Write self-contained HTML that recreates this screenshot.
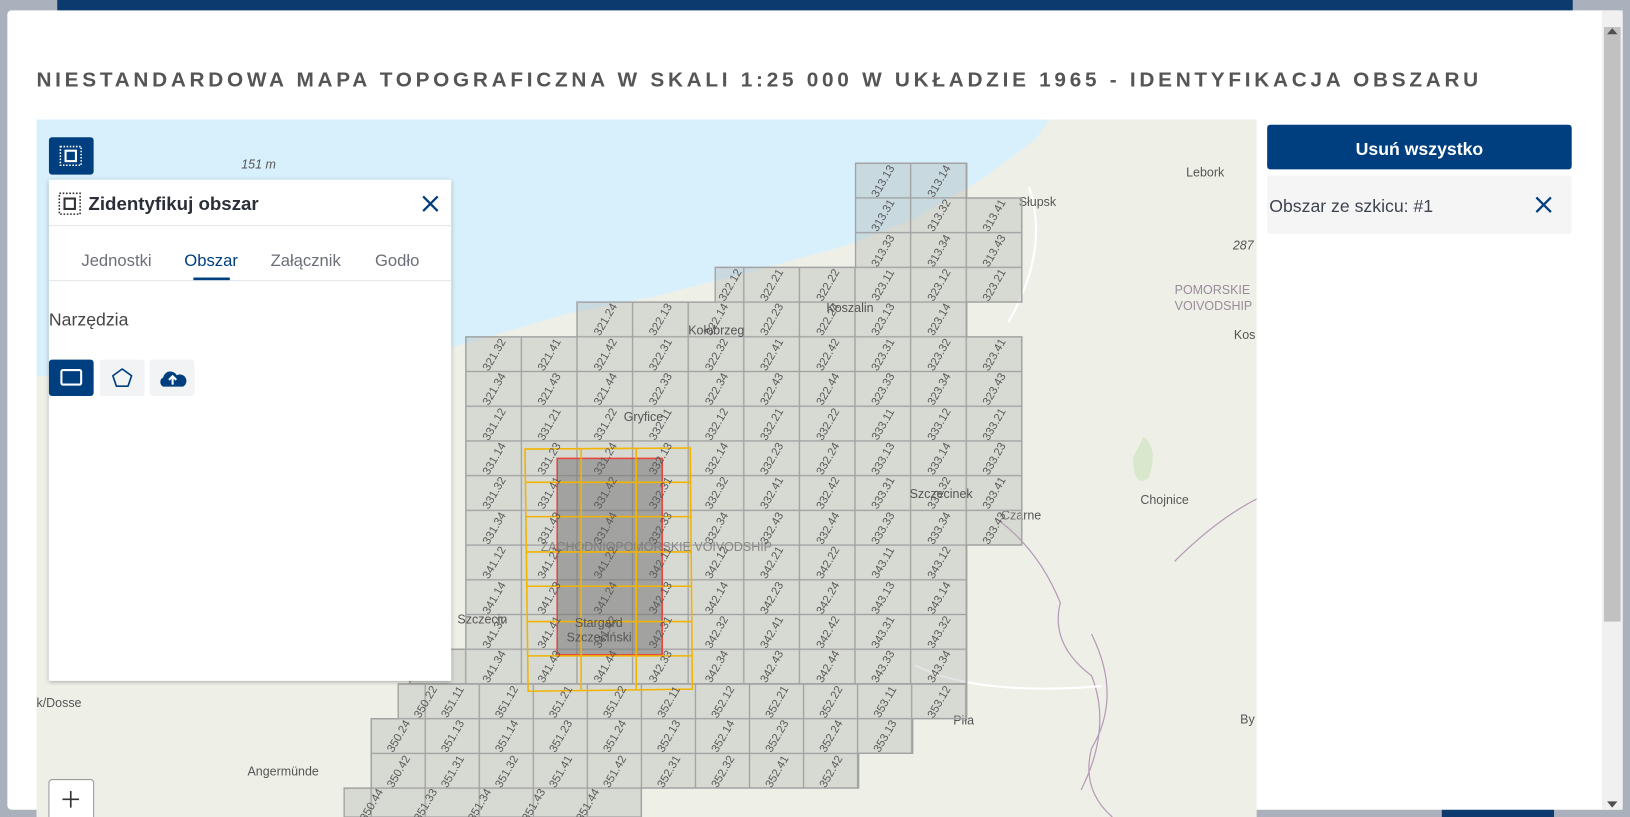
<!DOCTYPE html>
<html><head><meta charset="utf-8"><style>
html,body{margin:0;padding:0;width:1630px;height:817px;overflow:hidden;background:#aab1bc}
svg{display:block}
.l text{font:11px "Liberation Sans",sans-serif;fill:#5a5a5a;text-anchor:middle}
.c{font-family:"Liberation Sans",sans-serif;fill:#555;font-size:12px}
</style></head><body>
<svg width="1630" height="817" viewBox="0 0 1568 786" xmlns="http://www.w3.org/2000/svg">
<defs>
<clipPath id="mc"><rect x="35" y="115" width="1174" height="671"/></clipPath>
<pattern id="p1" patternUnits="userSpaceOnUse" x="448" y="157" width="53.5" height="33.4"><rect width="53.5" height="33.4" fill="none" stroke="#a2a2a2" stroke-width="1.3"/></pattern>
<pattern id="p2" patternUnits="userSpaceOnUse" x="357" y="658" width="52" height="33.4"><rect width="52" height="33.4" fill="none" stroke="#a2a2a2" stroke-width="1.3"/></pattern>
<filter id="sh" x="-5%" y="-5%" width="110%" height="110%"><feDropShadow dx="0" dy="1" stdDeviation="2" flood-opacity="0.3"/></filter>
</defs>
<rect width="1568" height="786" fill="#aab1bc"/>
<rect x="55" y="0" width="1458" height="12" fill="#0d3a6e"/>
<rect x="1387" y="776" width="108" height="10" fill="#0d3a6e"/>
<rect x="7" y="10" width="1554" height="769" rx="4" fill="#fff"/>
<rect x="1541" y="10" width="20" height="769" fill="#f0f0f0"/>
<rect x="1543" y="26" width="16" height="572" fill="#c1c1c1"/>
<path d="M1546 33 l5 -6 l5 6z M1546 771 l5 6 l5 -6z" fill="#505050"/>
<text x="35" y="83" textLength="1387" lengthAdjust="spacing" style="font:bold 20px 'Liberation Sans',sans-serif;fill:#555">NIESTANDARDOWA MAPA TOPOGRAFICZNA W SKALI 1:25 000 W UKŁADZIE 1965 - IDENTYFIKACJA OBSZARU</text>
<g clip-path="url(#mc)">
<rect x="35" y="115" width="1174" height="671" fill="#eef0e8"/>
<path d="M35 115 L1010 115 L995 135 L945 172 L880 210 L815 236 L720 262 L630 285 L545 302 L450 330 L380 348 L35 362Z" fill="#d8f0fb"/>
<path d="M1100 420 q15 10 5 40 q-15 10 -15 -20z" fill="#d9e8cc"/>
<path d="M960 500 q40 30 60 80 q-10 40 30 70 q20 50 -10 110" fill="none" stroke="#b79ab8" stroke-width="1.2"/>
<path d="M1050 610 q30 60 0 110 q-10 40 20 66" fill="none" stroke="#b79ab8" stroke-width="1.2"/>
<path d="M1130 540 q40 -40 79 -60" fill="none" stroke="#b79ab8" stroke-width="1.2"/>
<path d="M990 180 q20 60 -20 130" fill="none" stroke="#fff" stroke-width="2"/>
<path d="M880 640 q60 30 180 20" fill="none" stroke="#fff" stroke-width="2"/>
<g class="c">
<text x="232" y="162" font-style="italic">151 m</text>
<text x="1141" y="170">Lebork</text>
<text x="980" y="198">Słupsk</text>
<text x="1186" y="240" font-style="italic">287</text>
<text x="1130" y="283" fill="#9a8a9a">POMORSKIE</text>
<text x="1130" y="298" fill="#9a8a9a">VOIVODSHIP</text>
<text x="1187" y="326">Kos</text>
<text x="1097" y="485">Chojnice</text>
<text x="963" y="500">Czarne</text>
<text x="1193" y="696">By</text>
<text x="917" y="697">Piła</text>
<text x="238" y="746">Angermünde</text>
<text x="35" y="680">k/Dosse</text>
</g>
<polygon points="823,157 930,157 930,190.4 983,190.4 983,290.6 930,290.6 930,324 983,324 983,524.4 930,524.4 930,658 394,658 394,624.6 448,624.6 448,324 555,324 555,290.6 688,290.6 688,257.2 823,257.2" fill="#a8a8a8" fill-opacity="0.32"/>
<polygon points="823,157 930,157 930,190.4 983,190.4 983,290.6 930,290.6 930,324 983,324 983,524.4 930,524.4 930,658 394,658 394,624.6 448,624.6 448,324 555,324 555,290.6 688,290.6 688,257.2 823,257.2" fill="url(#p1)" stroke="#a2a2a2" stroke-width="1.3"/>
<polygon points="383,658 930,658 930,691.4 878,691.4 878,724.8 826,724.8 826,758.2 617,758.2 617,786 331,786 331,758.2 357,758.2 357,691.4 383,691.4" fill="#a8a8a8" fill-opacity="0.32"/>
<polygon points="383,658 930,658 930,691.4 878,691.4 878,724.8 826,724.8 826,758.2 617,758.2 617,786 331,786 331,758.2 357,758.2 357,691.4 383,691.4" fill="url(#p2)" stroke="#a2a2a2" stroke-width="1.3"/>
<g class="c">
<text x="600" y="405">Gryfice</text>
<text x="662" y="322">Kołobrzeg</text>
<text x="795" y="300">Koszalin</text>
<text x="875" y="479">Szczecinek</text>
<text x="440" y="600">Szczecin</text>
<text x="520" y="530" fill="#888">ZACHODNIOPOMORSKIE VOIVODSHIP</text>
</g>
<rect x="536" y="441" width="101" height="189" fill="#777" fill-opacity="0.55" stroke="#e8453c" stroke-width="1.5"/>
<g fill="none" stroke="#f2b400" stroke-width="1.5">
<path d="M505 432 L664 431 L666 663 L508 665Z"/>
<path d="M559 431 V664 M612 431 V664 M505 464 H665 M506 497 H665 M506 531 H665 M507 564 H665 M507 598 H666 M507 631 H666"/>
</g>
<g class="c"><text x="553" y="603">Stargard</text><text x="545" y="617">Szczeciński</text></g>
<g class="l">
<text x="849" y="178" transform="rotate(-60 849 174)">313.13</text><text x="903" y="178" transform="rotate(-60 903 174)">313.14</text>
<text x="849" y="211" transform="rotate(-60 849 207)">313.31</text><text x="903" y="211" transform="rotate(-60 903 207)">313.32</text><text x="956" y="211" transform="rotate(-60 956 207)">313.41</text>
<text x="849" y="245" transform="rotate(-60 849 241)">313.33</text><text x="903" y="245" transform="rotate(-60 903 241)">313.34</text><text x="956" y="245" transform="rotate(-60 956 241)">313.43</text>
<text x="702" y="278" transform="rotate(-60 702 274)">322.12</text><text x="742" y="278" transform="rotate(-60 742 274)">322.21</text><text x="796" y="278" transform="rotate(-60 796 274)">322.22</text><text x="849" y="278" transform="rotate(-60 849 274)">323.11</text><text x="903" y="278" transform="rotate(-60 903 274)">323.12</text><text x="956" y="278" transform="rotate(-60 956 274)">323.21</text>
<text x="582" y="311" transform="rotate(-60 582 307)">321.24</text><text x="635" y="311" transform="rotate(-60 635 307)">322.13</text><text x="689" y="311" transform="rotate(-60 689 307)">322.14</text><text x="742" y="311" transform="rotate(-60 742 307)">322.23</text><text x="796" y="311" transform="rotate(-60 796 307)">322.24</text><text x="849" y="311" transform="rotate(-60 849 307)">323.13</text><text x="903" y="311" transform="rotate(-60 903 307)">323.14</text>
<text x="475" y="345" transform="rotate(-60 475 341)">321.32</text><text x="528" y="345" transform="rotate(-60 528 341)">321.41</text><text x="582" y="345" transform="rotate(-60 582 341)">321.42</text><text x="635" y="345" transform="rotate(-60 635 341)">322.31</text><text x="689" y="345" transform="rotate(-60 689 341)">322.32</text><text x="742" y="345" transform="rotate(-60 742 341)">322.41</text><text x="796" y="345" transform="rotate(-60 796 341)">322.42</text><text x="849" y="345" transform="rotate(-60 849 341)">323.31</text><text x="903" y="345" transform="rotate(-60 903 341)">323.32</text><text x="956" y="345" transform="rotate(-60 956 341)">323.41</text>
<text x="475" y="378" transform="rotate(-60 475 374)">321.34</text><text x="528" y="378" transform="rotate(-60 528 374)">321.43</text><text x="582" y="378" transform="rotate(-60 582 374)">321.44</text><text x="635" y="378" transform="rotate(-60 635 374)">322.33</text><text x="689" y="378" transform="rotate(-60 689 374)">322.34</text><text x="742" y="378" transform="rotate(-60 742 374)">322.43</text><text x="796" y="378" transform="rotate(-60 796 374)">322.44</text><text x="849" y="378" transform="rotate(-60 849 374)">323.33</text><text x="903" y="378" transform="rotate(-60 903 374)">323.34</text><text x="956" y="378" transform="rotate(-60 956 374)">323.43</text>
<text x="475" y="412" transform="rotate(-60 475 408)">331.12</text><text x="528" y="412" transform="rotate(-60 528 408)">331.21</text><text x="582" y="412" transform="rotate(-60 582 408)">331.22</text><text x="635" y="412" transform="rotate(-60 635 408)">332.11</text><text x="689" y="412" transform="rotate(-60 689 408)">332.12</text><text x="742" y="412" transform="rotate(-60 742 408)">332.21</text><text x="796" y="412" transform="rotate(-60 796 408)">332.22</text><text x="849" y="412" transform="rotate(-60 849 408)">333.11</text><text x="903" y="412" transform="rotate(-60 903 408)">333.12</text><text x="956" y="412" transform="rotate(-60 956 408)">333.21</text>
<text x="475" y="445" transform="rotate(-60 475 441)">331.14</text><text x="528" y="445" transform="rotate(-60 528 441)">331.23</text><text x="582" y="445" transform="rotate(-60 582 441)">331.24</text><text x="635" y="445" transform="rotate(-60 635 441)">332.13</text><text x="689" y="445" transform="rotate(-60 689 441)">332.14</text><text x="742" y="445" transform="rotate(-60 742 441)">332.23</text><text x="796" y="445" transform="rotate(-60 796 441)">332.24</text><text x="849" y="445" transform="rotate(-60 849 441)">333.13</text><text x="903" y="445" transform="rotate(-60 903 441)">333.14</text><text x="956" y="445" transform="rotate(-60 956 441)">333.23</text>
<text x="475" y="478" transform="rotate(-60 475 474)">331.32</text><text x="528" y="478" transform="rotate(-60 528 474)">331.41</text><text x="582" y="478" transform="rotate(-60 582 474)">331.42</text><text x="635" y="478" transform="rotate(-60 635 474)">332.31</text><text x="689" y="478" transform="rotate(-60 689 474)">332.32</text><text x="742" y="478" transform="rotate(-60 742 474)">332.41</text><text x="796" y="478" transform="rotate(-60 796 474)">332.42</text><text x="849" y="478" transform="rotate(-60 849 474)">333.31</text><text x="903" y="478" transform="rotate(-60 903 474)">333.32</text><text x="956" y="478" transform="rotate(-60 956 474)">333.41</text>
<text x="475" y="512" transform="rotate(-60 475 508)">331.34</text><text x="528" y="512" transform="rotate(-60 528 508)">331.43</text><text x="582" y="512" transform="rotate(-60 582 508)">331.44</text><text x="635" y="512" transform="rotate(-60 635 508)">332.33</text><text x="689" y="512" transform="rotate(-60 689 508)">332.34</text><text x="742" y="512" transform="rotate(-60 742 508)">332.43</text><text x="796" y="512" transform="rotate(-60 796 508)">332.44</text><text x="849" y="512" transform="rotate(-60 849 508)">333.33</text><text x="903" y="512" transform="rotate(-60 903 508)">333.34</text><text x="956" y="512" transform="rotate(-60 956 508)">333.43</text>
<text x="475" y="545" transform="rotate(-60 475 541)">341.12</text><text x="528" y="545" transform="rotate(-60 528 541)">341.21</text><text x="582" y="545" transform="rotate(-60 582 541)">341.22</text><text x="635" y="545" transform="rotate(-60 635 541)">342.11</text><text x="689" y="545" transform="rotate(-60 689 541)">342.12</text><text x="742" y="545" transform="rotate(-60 742 541)">342.21</text><text x="796" y="545" transform="rotate(-60 796 541)">342.22</text><text x="849" y="545" transform="rotate(-60 849 541)">343.11</text><text x="903" y="545" transform="rotate(-60 903 541)">343.12</text>
<text x="475" y="579" transform="rotate(-60 475 575)">341.14</text><text x="528" y="579" transform="rotate(-60 528 575)">341.23</text><text x="582" y="579" transform="rotate(-60 582 575)">341.24</text><text x="635" y="579" transform="rotate(-60 635 575)">342.13</text><text x="689" y="579" transform="rotate(-60 689 575)">342.14</text><text x="742" y="579" transform="rotate(-60 742 575)">342.23</text><text x="796" y="579" transform="rotate(-60 796 575)">342.24</text><text x="849" y="579" transform="rotate(-60 849 575)">343.13</text><text x="903" y="579" transform="rotate(-60 903 575)">343.14</text>
<text x="475" y="612" transform="rotate(-60 475 608)">341.32</text><text x="528" y="612" transform="rotate(-60 528 608)">341.41</text><text x="582" y="612" transform="rotate(-60 582 608)">341.42</text><text x="635" y="612" transform="rotate(-60 635 608)">342.31</text><text x="689" y="612" transform="rotate(-60 689 608)">342.32</text><text x="742" y="612" transform="rotate(-60 742 608)">342.41</text><text x="796" y="612" transform="rotate(-60 796 608)">342.42</text><text x="849" y="612" transform="rotate(-60 849 608)">343.31</text><text x="903" y="612" transform="rotate(-60 903 608)">343.32</text>
<text x="475" y="645" transform="rotate(-60 475 641)">341.34</text><text x="528" y="645" transform="rotate(-60 528 641)">341.43</text><text x="582" y="645" transform="rotate(-60 582 641)">341.44</text><text x="635" y="645" transform="rotate(-60 635 641)">342.33</text><text x="689" y="645" transform="rotate(-60 689 641)">342.34</text><text x="742" y="645" transform="rotate(-60 742 641)">342.43</text><text x="796" y="645" transform="rotate(-60 796 641)">342.44</text><text x="849" y="645" transform="rotate(-60 849 641)">343.33</text><text x="903" y="645" transform="rotate(-60 903 641)">343.34</text>
<text x="409" y="679" transform="rotate(-60 409 675)">350.22</text><text x="435" y="679" transform="rotate(-60 435 675)">351.11</text><text x="487" y="679" transform="rotate(-60 487 675)">351.12</text><text x="539" y="679" transform="rotate(-60 539 675)">351.21</text><text x="591" y="679" transform="rotate(-60 591 675)">351.22</text><text x="643" y="679" transform="rotate(-60 643 675)">352.11</text><text x="695" y="679" transform="rotate(-60 695 675)">352.12</text><text x="747" y="679" transform="rotate(-60 747 675)">352.21</text><text x="799" y="679" transform="rotate(-60 799 675)">352.22</text><text x="851" y="679" transform="rotate(-60 851 675)">353.11</text><text x="903" y="679" transform="rotate(-60 903 675)">353.12</text>
<text x="383" y="712" transform="rotate(-60 383 708)">350.24</text><text x="435" y="712" transform="rotate(-60 435 708)">351.13</text><text x="487" y="712" transform="rotate(-60 487 708)">351.14</text><text x="539" y="712" transform="rotate(-60 539 708)">351.23</text><text x="591" y="712" transform="rotate(-60 591 708)">351.24</text><text x="643" y="712" transform="rotate(-60 643 708)">352.13</text><text x="695" y="712" transform="rotate(-60 695 708)">352.14</text><text x="747" y="712" transform="rotate(-60 747 708)">352.23</text><text x="799" y="712" transform="rotate(-60 799 708)">352.24</text><text x="851" y="712" transform="rotate(-60 851 708)">353.13</text>
<text x="383" y="746" transform="rotate(-60 383 742)">350.42</text><text x="435" y="746" transform="rotate(-60 435 742)">351.31</text><text x="487" y="746" transform="rotate(-60 487 742)">351.32</text><text x="539" y="746" transform="rotate(-60 539 742)">351.41</text><text x="591" y="746" transform="rotate(-60 591 742)">351.42</text><text x="643" y="746" transform="rotate(-60 643 742)">352.31</text><text x="695" y="746" transform="rotate(-60 695 742)">352.32</text><text x="747" y="746" transform="rotate(-60 747 742)">352.41</text><text x="799" y="746" transform="rotate(-60 799 742)">352.42</text>
<text x="357" y="778" transform="rotate(-60 357 774)">350.44</text><text x="409" y="778" transform="rotate(-60 409 774)">351.33</text><text x="461" y="778" transform="rotate(-60 461 774)">351.34</text><text x="513" y="778" transform="rotate(-60 513 774)">351.43</text><text x="565" y="778" transform="rotate(-60 565 774)">351.44</text>
</g>
<rect x="47" y="750" width="43" height="40" rx="3" fill="#fff" stroke="#999"/>
<path d="M68 761 v16 M60 769 h16" stroke="#333" stroke-width="1.6"/>
</g>
<rect x="47" y="132" width="43" height="36" rx="3" fill="#003f7f"/>
<rect x="58" y="141" width="20" height="18" fill="none" stroke="#fff" stroke-width="1.5" stroke-dasharray="1.5 1.5"/>
<rect x="63" y="145" width="10" height="10" fill="none" stroke="#fff" stroke-width="2"/>
<g filter="url(#sh)"><rect x="47" y="173" width="387" height="482" fill="#fff"/></g>
<rect x="57" y="186" width="20" height="20" fill="none" stroke="#333" stroke-width="1.5" stroke-dasharray="1.6 1.6"/>
<rect x="62" y="191" width="10" height="10" fill="none" stroke="#333" stroke-width="2"/>
<text x="85" y="202" style="font:bold 18px 'Liberation Sans',sans-serif;fill:#2b2f38">Zidentyfikuj obszar</text>
<path d="M407 189 l14 14 M421 189 l-14 14" stroke="#003f7f" stroke-width="2.2"/>
<rect x="47" y="216.5" width="387" height="1" fill="#e3e6ea"/>
<g style="font:16px 'Liberation Sans',sans-serif;fill:#6b6f78" text-anchor="middle">
<text x="112" y="256">Jednostki</text>
<text x="203" y="256" fill="#003f7f">Obszar</text>
<text x="294" y="256">Załącznik</text>
<text x="382" y="256">Godło</text>
</g>
<rect x="186" y="267" width="35" height="3" fill="#003f7f"/>
<rect x="47" y="269.5" width="387" height="1" fill="#e3e6ea"/>
<text x="47" y="313" style="font:17px 'Liberation Sans',sans-serif;fill:#444">Narzędzia</text>
<rect x="47" y="346" width="43" height="35" rx="3" fill="#003f7f"/>
<rect x="59" y="356" width="19" height="14" rx="1.5" fill="none" stroke="#fff" stroke-width="2"/>
<rect x="96" y="346" width="43" height="35" rx="3" fill="#f1f3f5"/>
<path d="M117.5 355 l9 6.5 -3.4 10 h-11.2 l-3.4 -10z" fill="none" stroke="#003f7f" stroke-width="1.6" stroke-linejoin="round"/>
<rect x="144" y="346" width="43" height="35" rx="3" fill="#f1f3f5"/>
<path d="M157 372 a5 5 0 0 1 0 -9 a7 7 0 0 1 13 -2 a5.5 5.5 0 0 1 6 11z" fill="#003f7f"/>
<path d="M166 370 v-7 M162.5 365.5 l3.5 -3.5 3.5 3.5" stroke="#fff" stroke-width="2" fill="none"/>
<rect x="1219" y="120" width="293" height="43" rx="3" fill="#003f7f"/>
<text x="1365.5" y="149" text-anchor="middle" style="font:bold 17px 'Liberation Sans',sans-serif;fill:#fff">Usuń wszystko</text>
<rect x="1219" y="169" width="293" height="56" rx="3" fill="#f6f5f6"/>
<text x="1221" y="204" style="font:17px 'Liberation Sans',sans-serif;fill:#3d4450">Obszar ze szkicu: #1</text>
<path d="M1478 190 l14 14 M1492 190 l-14 14" stroke="#003f7f" stroke-width="2.2"/>
</svg>
</body></html>
